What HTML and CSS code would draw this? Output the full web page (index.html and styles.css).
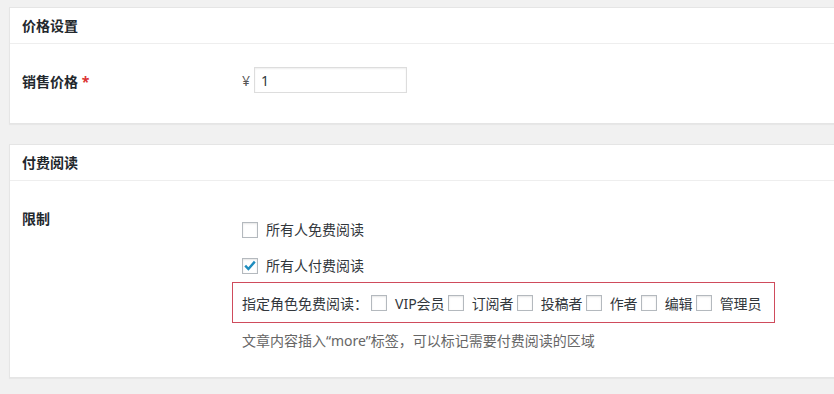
FILE: index.html
```html
<!DOCTYPE html>
<html lang="zh-CN">
<head>
  <meta charset="UTF-8">
  <meta name="viewport" content="width=device-width, initial-scale=1.0">
  <title>价格设置</title>
  <link rel="stylesheet" href="styles.css">
</head>
<body>
  <div class="wrap">
    <div class="postbox">
      <h2 class="postbox-title">价格设置</h2>
      <div class="inside price-row">
        <div class="field-label">销售价格 <span class="required">*</span></div>
        <div class="field-input">
          <span class="currency">¥</span>
          <input class="text-input" type="text" value="1">
        </div>
      </div>
    </div>

    <div class="postbox">
      <h2 class="postbox-title">付费阅读</h2>
      <div class="inside read-row">
        <div class="field-label">限制</div>
        <div class="field-options">
          <label class="option"><span class="cb"></span>所有人免费阅读</label>
          <label class="option"><span class="cb checked"><svg width="16" height="16" viewBox="0 0 16 16"><path d="M3.2 7.6 L6.4 11 L12.8 3.6" fill="none" stroke="#1e8cbe" stroke-width="2.4" stroke-linejoin="miter"/></svg></span>所有人付费阅读</label>
          <div class="roles">
            <span class="roles-title">指定角色免费阅读：</span>
            <span class="cb"></span><span class="role">VIP会员</span>
            <span class="cb"></span><span class="role">订阅者</span>
            <span class="cb"></span><span class="role">投稿者</span>
            <span class="cb"></span><span class="role">作者</span>
            <span class="cb"></span><span class="role">编辑</span>
            <span class="cb"></span><span class="role">管理员</span>
          </div>
          <p class="description">文章内容插入“more”标签，可以标记需要付费阅读的区域</p>
        </div>
      </div>
    </div>
  </div>
</body>
</html>
```

FILE: styles.css
```css
body {
  margin: 0;
  background-color: #f1f1f1;
  font-family: "Noto Sans", "Noto Sans CJK SC", "Microsoft YaHei", sans-serif;
  font-size: 14px;
  color: #32373c;
  overflow: hidden;
}
.wrap {
  padding: 7px 0 0 9px;
  margin-right: -20px;
}
.postbox {
  background-color: #ffffff;
  border: 1px solid #e5e5e5;
  box-shadow: 0 1px 1px rgba(0, 0, 0, 0.04);
  margin-bottom: 20px;
}
.postbox-title {
  margin: 0;
  height: 35px;
  line-height: 35px;
  padding: 0 12px;
  font-size: 14px;
  font-weight: 700;
  color: #23282d;
  border-bottom: 1px solid #eeeeee;
}
.inside {
  display: flex;
  padding-left: 12px;
}
.field-label {
  width: 220px;
  flex-shrink: 0;
  font-weight: 700;
  color: #23282d;
  line-height: 20px;
}
.required {
  color: #dc3232;
}

/* price */
.price-row {
  padding-top: 23px;
  padding-bottom: 30px;
  align-items: flex-start;
}
.price-row .field-label {
  padding-top: 5px;
}
.field-input {
  display: flex;
  align-items: center;
  height: 26px;
}
.currency {
  width: 12px;
  color: #555555;
}
.text-input {
  box-sizing: border-box;
  width: 153px;
  height: 26px;
  margin: 0;
  padding: 0 6px;
  border: 1px solid #dddddd;
  box-shadow: inset 0 1px 2px rgba(0, 0, 0, 0.07);
  font-family: inherit;
  font-size: 14px;
  color: #32373c;
  outline: none;
}

/* paid reading */
.read-row {
  padding-top: 28px;
  padding-bottom: 26px;
}
.field-options {
  padding-top: 11px;
  display: flex;
  flex-direction: column;
  align-items: flex-start;
}
.option {
  display: flex;
  align-items: center;
  height: 20px;
  line-height: 20px;
  margin-bottom: 16px;
  color: #32373c;
}
.option + .option {
  margin-bottom: 6px;
}
.cb {
  box-sizing: border-box;
  width: 16px;
  height: 16px;
  flex-shrink: 0;
  border: 1px solid #b4b9be;
  background-color: #ffffff;
  box-shadow: inset 0 1px 2px rgba(0, 0, 0, 0.1);
  position: relative;
}
.cb svg {
  position: absolute;
  left: -1px;
  top: -1px;
}
.option .cb {
  margin-right: 8px;
}
.roles {
  display: flex;
  align-items: center;
  height: 39px;
  margin-left: -10px;
  padding: 0 12px 0 9px;
  border: 1px solid #cf4b5c;
  color: #32373c;
}
.roles .cb {
  margin-left: 3px;
}
.role {
  margin-left: 8px;
}
.description {
  margin: 8px 0 0 0;
  line-height: 20px;
  color: #666666;
}
```
